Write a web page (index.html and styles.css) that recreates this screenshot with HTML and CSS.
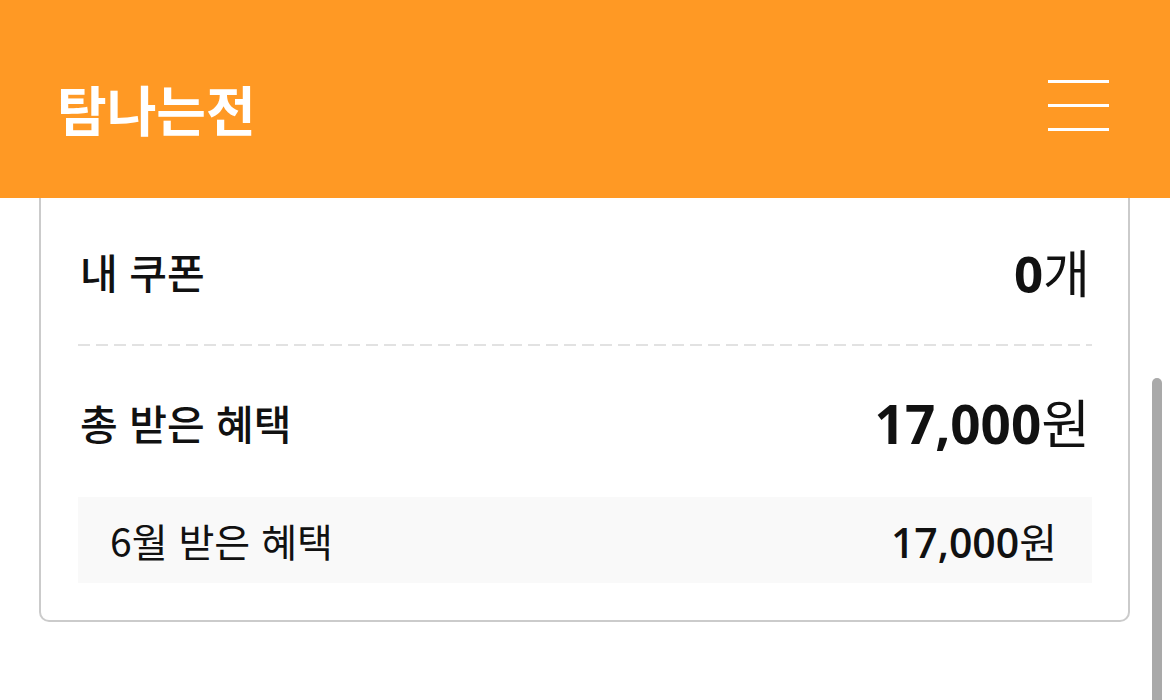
FILE: index.html
```html
<!DOCTYPE html>
<html lang="ko">
<head>
    <meta charset="UTF-8">
    <meta name="viewport" content="width=device-width, initial-scale=1.0">
    <title>탐나는전</title>
    <link rel="stylesheet" href="styles.css">
</head>
<body>
    <header class="top-bar">
        <h1 class="logo">탐나는전</h1>
        <button class="menu-btn" aria-label="메뉴">
            <span></span>
            <span></span>
            <span></span>
        </button>
    </header>

    <main class="content">
        <section class="benefit-card">
            <div class="row">
                <span class="label">내 쿠폰</span>
                <span class="value"><b>0</b>개</span>
            </div>
            <div class="divider"></div>
            <div class="row row-total">
                <span class="label">총 받은 혜택</span>
                <span class="value value-big"><b>17,000</b>원</span>
            </div>
            <div class="sub-row">
                <span class="sub-label">6월 받은 혜택</span>
                <span class="sub-value"><b>17,000</b>원</span>
            </div>
        </section>
    </main>

    <div class="scroll-thumb"></div>
</body>
</html>
```

FILE: styles.css
```css
body {
    margin: 0;
    font-family: "Open Sans", "Noto Sans CJK KR", sans-serif;
    background: #fff;
    color: #111;
    overflow: hidden;
}
.top-bar {
    height: 198px;
    background: #ff9924;
    display: flex;
    align-items: center;
    justify-content: space-between;
    padding: 0 61px 0 57px;
}
.logo {
    margin: 0;
    color: #fff;
    font-family: "Noto Sans CJK KR", sans-serif;
    font-size: 54px;
    font-weight: 700;
    padding-top: 18px;
}
.menu-btn {
    width: 61px;
    height: 51px;
    padding: 0;
    border: none;
    background: none;
    display: flex;
    flex-direction: column;
    justify-content: space-between;
    cursor: pointer;
    margin-top: 13px;
}
.menu-btn span {
    display: block;
    height: 3px;
    background: #fff;
}
.content {
    padding: 0 40px 0 39px;
}
.benefit-card {
    border: 2px solid #cbcbcb;
    border-top: none;
    border-radius: 0 0 10px 10px;
    padding: 0 36px 37px 37px;
}
.row {
    height: 146px;
    display: flex;
    align-items: center;
    justify-content: space-between;
    padding: 0 2px;
}
.row-total {
    height: 151px;
}
.label {
    font-family: "Noto Sans CJK KR", sans-serif;
    font-size: 41px;
    font-weight: 500;
}
.value {
    font-size: 51px;
    font-weight: 400;
    font-family: "Open Sans", "Noto Sans CJK KR", sans-serif;
}
.value b {
    font-weight: 700;
}
.value-big {
    font-size: 53px;
}
.divider {
    height: 2px;
    background: repeating-linear-gradient(90deg, #e2e2e2 0 12px, transparent 12px 18px);
}
.sub-row {
    height: 86px;
    background: #f9f9f9;
    display: flex;
    align-items: center;
    justify-content: space-between;
    padding: 0 35px 0 32px;
}
.sub-label {
    font-family: "Noto Sans CJK KR", sans-serif;
    font-size: 39px;
    font-weight: 400;
}
.sub-value {
    font-size: 41px;
}
.sub-value b {
    font-weight: 600;
}
.scroll-thumb {
    position: fixed;
    top: 378px;
    right: 8px;
    width: 10px;
    height: 340px;
    border-radius: 5px;
    background: #a9a9a9;
}
```
